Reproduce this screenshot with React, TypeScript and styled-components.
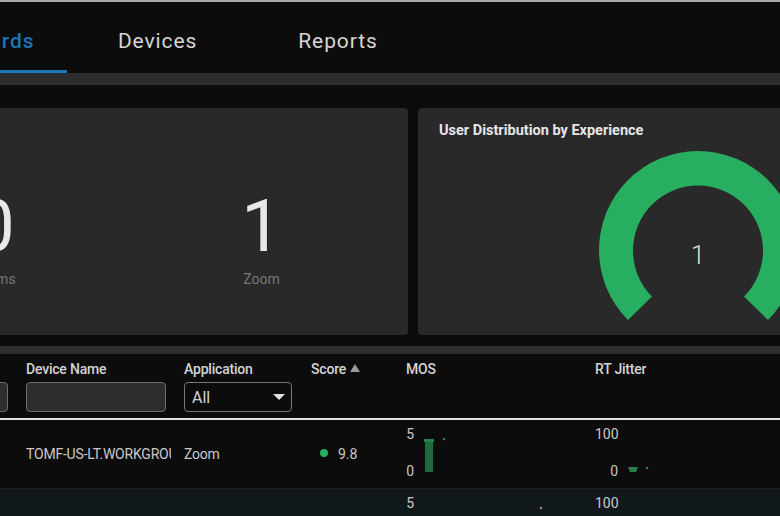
import * as React from 'react';
import styled, { createGlobalStyle } from 'styled-components';

const GlobalStyle = createGlobalStyle`
  html, body {
    margin: 0;
    height: 100%;
    overflow: hidden;
    background-color: #0c0c0c;
    font-family: Roboto, "Liberation Sans", sans-serif;
    color: #e2e2e2;
  }
  * { box-sizing: border-box; }
`;

const Page = styled.div`
  width: 780px;
  height: 516px;
  overflow: hidden;
  border-top: 2px solid #a9a9a9;
`;

const TabBar = styled.nav`
  display: flex;
  height: 71px;
  margin-left: -120px;
`;

const Tab = styled.a<{ $active?: boolean }>`
  display: flex;
  align-items: center;
  height: 71px;
  padding: 10px ${p => (p.$active ? '33px' : '50.500px')} 0;
  font-size: 21px;
  font-weight: ${p => (p.$active ? 500 : 400)};
  letter-spacing: 0.9px;
  color: ${p => (p.$active ? '#1a75bb' : '#d6d6d6')};
  border-bottom: 3px solid ${p => (p.$active ? '#1a75bb' : 'transparent')};
`;

const Divider = styled.div<{ $height: number }>`
  height: ${p => p.$height}px;
  background-color: #2d2d2d;
`;

const Cards = styled.section`
  display: flex;
  gap: 10px;
  height: 227px;
  margin: 23px -60px 11px -150px;
`;

const Card = styled.div`
  height: 100%;
  background-color: #292929;
  border-radius: 4px;
`;

const StatsCard = styled(Card)`
  display: grid;
  grid-template-columns: 269px 265px;
  width: 558px;
  padding-left: 10px;
`;

const Stat = styled.div`
  display: flex;
  flex-direction: column;
  align-items: center;
  padding-top: 77px;
`;

const StatValue = styled.div`
  font-size: 72px;
  font-weight: 400;
  line-height: 84px;
  color: #e8e8e8;
`;

const StatLabel = styled.div`
  margin-top: 2px;
  font-size: 14px;
  color: #777;
`;

const GaugeCard = styled(Card)`
  width: 422px;
  padding: 14px 21px;
`;

const CardTitle = styled.h3`
  margin: 0;
  font-size: 14.500px;
  font-weight: 700;
  line-height: 17px;
  color: #e6e6e6;
`;

const GaugeWrap = styled.div`
  position: relative;
  width: 200px;
  height: 175px;
  margin: 11px 0 0 159px;
`;

const GaugeValue = styled.div`
  position: absolute;
  left: 0;
  right: 0;
  top: 90px;
  text-align: center;
  font-size: 26px;
  font-weight: 300;
  line-height: 30px;
  color: #dcdcdc;
`;

const TableGrid = styled.div`
  display: grid;
  grid-template-columns: 146px 158px 127px 95px 189px 1fr;
  width: 900px;
  margin-left: -120px;
`;

const HeadRow = styled(TableGrid)`
  height: 66px;
  padding-top: 7px;
  border-bottom: 2px solid #e4e4e4;
`;

const HeadCell = styled.div`
  display: flex;
  flex-direction: column;
  gap: 5px;
`;

const HeadLabel = styled.div`
  display: flex;
  align-items: center;
  gap: 4px;
  height: 16px;
  font-size: 14px;
  font-weight: 500;
  letter-spacing: -0.200px;
  line-height: 16px;
  color: #d4d4d4;
`;

const SortArrow = styled.span`
  width: 0;
  height: 0;
  margin-bottom: 2px;
  border-left: 5.500px solid transparent;
  border-right: 5.500px solid transparent;
  border-bottom: 8px solid #9a9a9a;
`;

const FilterInput = styled.input<{ $width: number }>`
  display: block;
  width: ${p => p.$width}px;
  height: 30px;
  margin: 0;
  background-color: #2d2d2d;
  border: 1px solid #6f6f6f;
  border-radius: 4px;
  outline: none;
`;

const Select = styled.div`
  display: flex;
  align-items: center;
  justify-content: space-between;
  width: 108px;
  height: 30px;
  padding: 0 6px 0 7px;
  font-size: 16px;
  color: #d4d4d4;
  background-color: #0c0c0c;
  border: 1px solid #777;
  border-radius: 4px;
`;

const Caret = styled.span`
  width: 0;
  height: 0;
  border-left: 6px solid transparent;
  border-right: 6px solid transparent;
  border-top: 6px solid #e2e2e2;
`;

const Row = styled(TableGrid)<{ $alt?: boolean }>`
  height: 69px;
  background-color: ${p => (p.$alt ? '#11181c' : '#0c0c0c')};
  border-bottom: 1px solid #1c2226;
`;

const TextCell = styled.div`
  display: flex;
  align-items: center;
  font-size: 14px;
  letter-spacing: -0.200px;
  line-height: 16px;
  color: #c9c9c9;
  overflow: hidden;
`;

const DeviceName = styled.span`
  display: block;
  width: 145px;
  white-space: nowrap;
  overflow: hidden;
`;

const ScoreCell = styled(TextCell)`
  gap: 10px;
  padding-left: 9px;
  letter-spacing: 0;
`;

const ScoreDot = styled.span`
  width: 8px;
  height: 8px;
  margin-bottom: 2px;
  border-radius: 50%;
  background-color: #27ae60;
`;

const ChartCell = styled.div`
  display: flex;
  align-items: flex-start;
  height: 68px;
  padding-top: 6px;
`;

const Axis = styled.div<{ $width: number }>`
  display: flex;
  flex-direction: column;
  justify-content: space-between;
  width: ${p => p.$width}px;
  height: 53px;
  font-size: 14px;
  line-height: 16px;
  text-align: right;
  color: #c9c9c9;
`;

const ChartArea = styled.div<{ $offset: number }>`
  margin-left: ${p => p.$offset}px;
`;

const Gauge = () => (
  <svg width="200" height="175" viewBox="0 0 200 175">
    <path
      d="M30 170 A99 99 0 1 1 170 170 L146 146.500 A65 65 0 1 0 54 146.500 Z"
      fill="#27ae60"
    />
  </svg>
);

const MosChart = () => (
  <svg width="80" height="53" viewBox="0 0 80 53">
    <rect x="5" y="14" width="8" height="32" fill="#1f6b3f" />
    <rect x="4" y="13" width="10" height="3" fill="#27804a" />
    <circle cx="24" cy="13" r="1.300" fill="#27804a" />
  </svg>
);

const JitterChart = () => (
  <svg width="80" height="53" viewBox="0 0 80 53">
    <path d="M8 41 H18 L16 46 H10 Z" fill="#27804a" />
    <circle cx="27" cy="42" r="1.300" fill="#27804a" />
  </svg>
);

const StrayPoint = () => (
  <svg width="140" height="53" viewBox="0 0 140 53">
    <circle cx="127" cy="13" r="1.300" fill="#8a8a8a" />
  </svg>
);

export default function App() {
  return (
    <Page>
      <GlobalStyle />
      <TabBar>
        <Tab $active>Dashboards</Tab>
        <Tab>Devices</Tab>
        <Tab>Reports</Tab>
      </TabBar>
      <Divider $height={12} />
      <Cards>
        <StatsCard>
          <Stat>
            <StatValue>0</StatValue>
            <StatLabel>Teams</StatLabel>
          </Stat>
          <Stat>
            <StatValue>1</StatValue>
            <StatLabel>Zoom</StatLabel>
          </Stat>
        </StatsCard>
        <GaugeCard>
          <CardTitle>User Distribution by Experience</CardTitle>
          <GaugeWrap>
            <Gauge />
            <GaugeValue>1</GaugeValue>
          </GaugeWrap>
        </GaugeCard>
      </Cards>
      <Divider $height={8} />
      <HeadRow>
        <HeadCell>
          <HeadLabel>User Name</HeadLabel>
          <FilterInput $width={128} />
        </HeadCell>
        <HeadCell>
          <HeadLabel>Device Name</HeadLabel>
          <FilterInput $width={140} />
        </HeadCell>
        <HeadCell>
          <HeadLabel>Application</HeadLabel>
          <Select>
            All
            <Caret />
          </Select>
        </HeadCell>
        <HeadCell>
          <HeadLabel>
            Score
            <SortArrow />
          </HeadLabel>
        </HeadCell>
        <HeadCell>
          <HeadLabel>MOS</HeadLabel>
        </HeadCell>
        <HeadCell>
          <HeadLabel>RT Jitter</HeadLabel>
        </HeadCell>
      </HeadRow>
      <Row>
        <TextCell />
        <TextCell>
          <DeviceName>TOMF-US-LT.WORKGROUP</DeviceName>
        </TextCell>
        <TextCell>Zoom</TextCell>
        <ScoreCell>
          <ScoreDot />
          9.8
        </ScoreCell>
        <ChartCell>
          <Axis $width={8}>
            <div>5</div>
            <div>0</div>
          </Axis>
          <ChartArea $offset={6}>
            <MosChart />
          </ChartArea>
        </ChartCell>
        <ChartCell>
          <Axis $width={23}>
            <div>100</div>
            <div>0</div>
          </Axis>
          <ChartArea $offset={2}>
            <JitterChart />
          </ChartArea>
        </ChartCell>
      </Row>
      <Row $alt>
        <TextCell />
        <TextCell />
        <TextCell />
        <TextCell />
        <ChartCell>
          <Axis $width={8}>
            <div>5</div>
            <div>0</div>
          </Axis>
          <StrayPoint />
        </ChartCell>
        <ChartCell>
          <Axis $width={23}>
            <div>100</div>
            <div>0</div>
          </Axis>
        </ChartCell>
      </Row>
    </Page>
  );
}
